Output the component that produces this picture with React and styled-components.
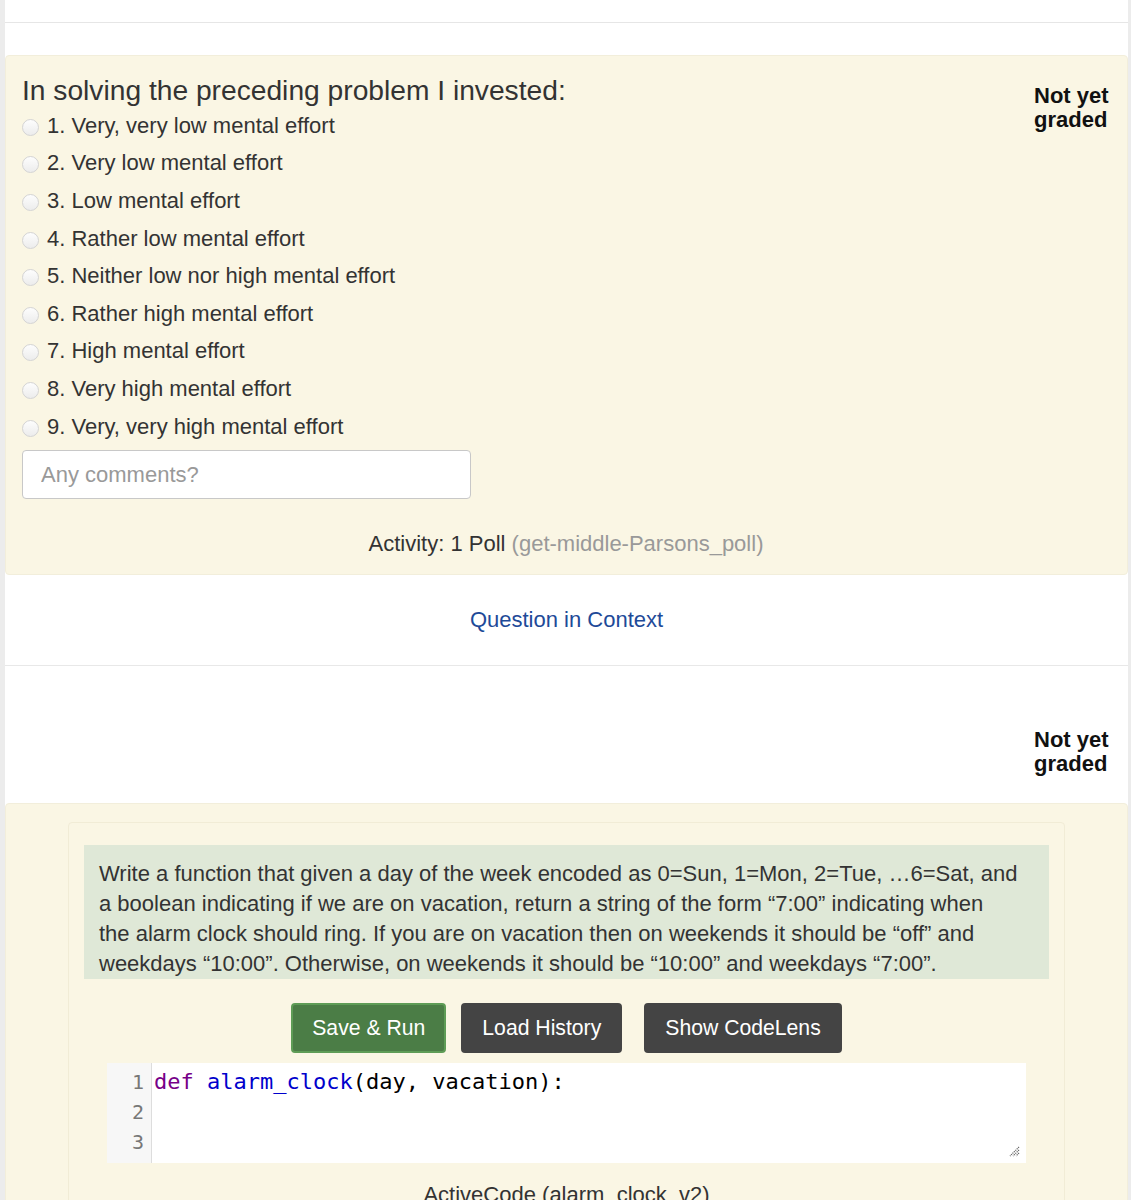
import React from 'react';
import styled, { createGlobalStyle } from 'styled-components';

const Global = createGlobalStyle`
  html, body { margin: 0; padding: 0; background: #ececec; }
  body { font-family: "Liberation Sans", Arial, Helvetica, sans-serif; color: #333; }
  * { box-sizing: border-box; }
`;

const Page = styled.div`
  margin: 0 3px 0 5px;
  background: #fff;
  min-height: 1200px;
  overflow: hidden;
`;

const TopRule = styled.div`
  height: 23px;
  border-bottom: 1px solid #e6e6e6;
  margin-bottom: 32px;
`;

const Panel = styled.section`
  background: #faf6e4;
  border: 1px solid #f2eedb;
  border-radius: 4px;
  padding: ${p => p.$pad};
`;

const PollRow = styled.div`
  display: flex;
  justify-content: space-between;
  align-items: flex-start;
`;

const PollMain = styled.div`
  display: flex;
  flex-direction: column;
`;

const Title = styled.div`
  font-size: 28.2px;
  line-height: 30px;
  color: #333;
  margin-bottom: 2px;
`;

const Option = styled.label`
  display: flex;
  align-items: center;
  gap: 8px;
  height: 37.6px;
  font-size: 22px;
  color: #333;
`;

const Radio = styled.span`
  width: 17px;
  height: 17px;
  border-radius: 50%;
  border: 1px solid #d4d4d4;
  background: linear-gradient(#fdfdfd, #ececec);
  flex: none;
  margin-top: 3px;
`;

const Comments = styled.input`
  margin-top: 5px;
  width: 449px;
  height: 49px;
  border: 1px solid #c8c8c8;
  border-radius: 4px;
  background: #fff;
  padding: 0 18px;
  font-family: "Liberation Sans", Arial, sans-serif;
  font-size: 22px;
  color: #333;
  &::placeholder { color: #999; }
`;

const Grade = styled.div`
  font-size: 22px;
  line-height: 24px;
  font-weight: bold;
  color: #111;
  width: 76px;
  margin-top: ${p => p.$top || '10px'};
`;

const GradeRow = styled.div`
  display: flex;
  justify-content: flex-end;
  padding-right: 18px;
  margin-top: 62px;
  margin-bottom: 27px;
`;

const Footer = styled.div`
  text-align: center;
  font-size: 22px;
  line-height: 24px;
  color: #333;
  margin-top: ${p => p.$top || '0'};
`;

const Muted = styled.span`
  color: #999;
`;

const LinkRow = styled.div`
  text-align: center;
  padding: 33px 0 33px;
  border-bottom: 1px solid #e8e8e8;
  font-size: 22px;
  line-height: 24px;
`;

const Link = styled.a`
  color: #1e4a98;
  text-decoration: none;
`;

const Card = styled.div`
  border: 1px solid #f1ecd6;
  border-radius: 4px;
  padding: 22px 15px 0;
`;

const Prompt = styled.div`
  background: #dfe8d7;
  padding: 14px 14px 0 15px;
  font-size: 22px;
  line-height: 30px;
  color: #333;
`;

const Buttons = styled.div`
  display: flex;
  justify-content: center;
  gap: 15px;
  margin-top: 24px;
`;

const Button = styled.button`
  height: 50px;
  padding: 0 19px;
  border-radius: 4px;
  border: 2px solid ${p => (p.$green ? '#5e9c56' : '#444')};
  background: ${p => (p.$green ? '#4b7d46' : '#444')};
  color: #fff;
  font-family: "Liberation Sans", Arial, sans-serif;
  font-size: 21.2px;
  margin-left: ${p => p.$ml || '0'};
`;

const Editor = styled.div`
  position: relative;
  margin: 10px 23px 0;
  height: 100px;
  background: #fff;
  display: flex;
`;

const Gutter = styled.div`
  width: 45px;
  background: #f7f7f7;
  border-right: 1px solid #ddd;
  padding: 4px 7px 0 0;
  text-align: right;
  font-family: "DejaVu Sans Mono", monospace;
  font-size: 20px;
  line-height: 30px;
  color: #777;
`;

const Code = styled.div`
  padding: 4px 0 0 2px;
  font-family: "DejaVu Sans Mono", monospace;
  font-size: 22px;
  line-height: 30px;
  color: #000;
  white-space: pre;
`;

const Kw = styled.span`
  color: #770088;
`;

const Def = styled.span`
  color: #0000cc;
`;

const Handle = styled.svg`
  position: absolute;
  right: 6px;
  bottom: 6px;
`;

const questions = [
  '1. Very, very low mental effort',
  '2. Very low mental effort',
  '3. Low mental effort',
  '4. Rather low mental effort',
  '5. Neither low nor high mental effort',
  '6. Rather high mental effort',
  '7. High mental effort',
  '8. Very high mental effort',
  '9. Very, very high mental effort',
];

export default function App() {
  return (
    <>
      <Global />
      <Page>
        <TopRule />
        <Panel $pad="19px 17px 18px 16px">
          <PollRow>
            <PollMain>
              <Title>In solving the preceding problem I invested:</Title>
              {questions.map(q => (
                <Option key={q}>
                  <Radio />
                  {q}
                </Option>
              ))}
              <Comments placeholder="Any comments?" />
            </PollMain>
            <Grade $top="9px">Not yet graded</Grade>
          </PollRow>
          <Footer $top="33px">
            Activity: 1 Poll <Muted>(get-middle-Parsons_poll)</Muted>
          </Footer>
        </Panel>
        <LinkRow>
          <Link href="#">Question in Context</Link>
        </LinkRow>
        <GradeRow>
          <Grade $top="0">Not yet graded</Grade>
        </GradeRow>
        <Panel $pad="18px 62px 0 62px">
          <Card>
            <Prompt>
              Write a function that given a day of the week encoded as 0=Sun, 1=Mon, 2=Tue, …6=Sat, and
              <br />
              a boolean indicating if we are on vacation, return a string of the form “7:00” indicating when
              <br />
              the alarm clock should ring. If you are on vacation then on weekends it should be “off” and
              <br />
              weekdays “10:00”. Otherwise, on weekends it should be “10:00” and weekdays “7:00”.
            </Prompt>
            <Buttons>
              <Button $green>Save &amp; Run</Button>
              <Button>Load History</Button>
              <Button $ml="7px">Show CodeLens</Button>
            </Buttons>
            <Editor>
              <Gutter>
                1<br />2<br />3
              </Gutter>
              <Code>
                <Kw>def</Kw> <Def>alarm_clock</Def>(day, vacation):
              </Code>
              <Handle width="12" height="12" viewBox="0 0 12 12">
                <path d="M11 2 L2 11 M11 5 L5 11 M11 8 L8 11" stroke="#666" strokeWidth="1.2" strokeDasharray="1.2 0.8" />
              </Handle>
            </Editor>
            <Footer $top="20px">ActiveCode (alarm_clock_v2)</Footer>
          </Card>
        </Panel>
      </Page>
    </>
  );
}
